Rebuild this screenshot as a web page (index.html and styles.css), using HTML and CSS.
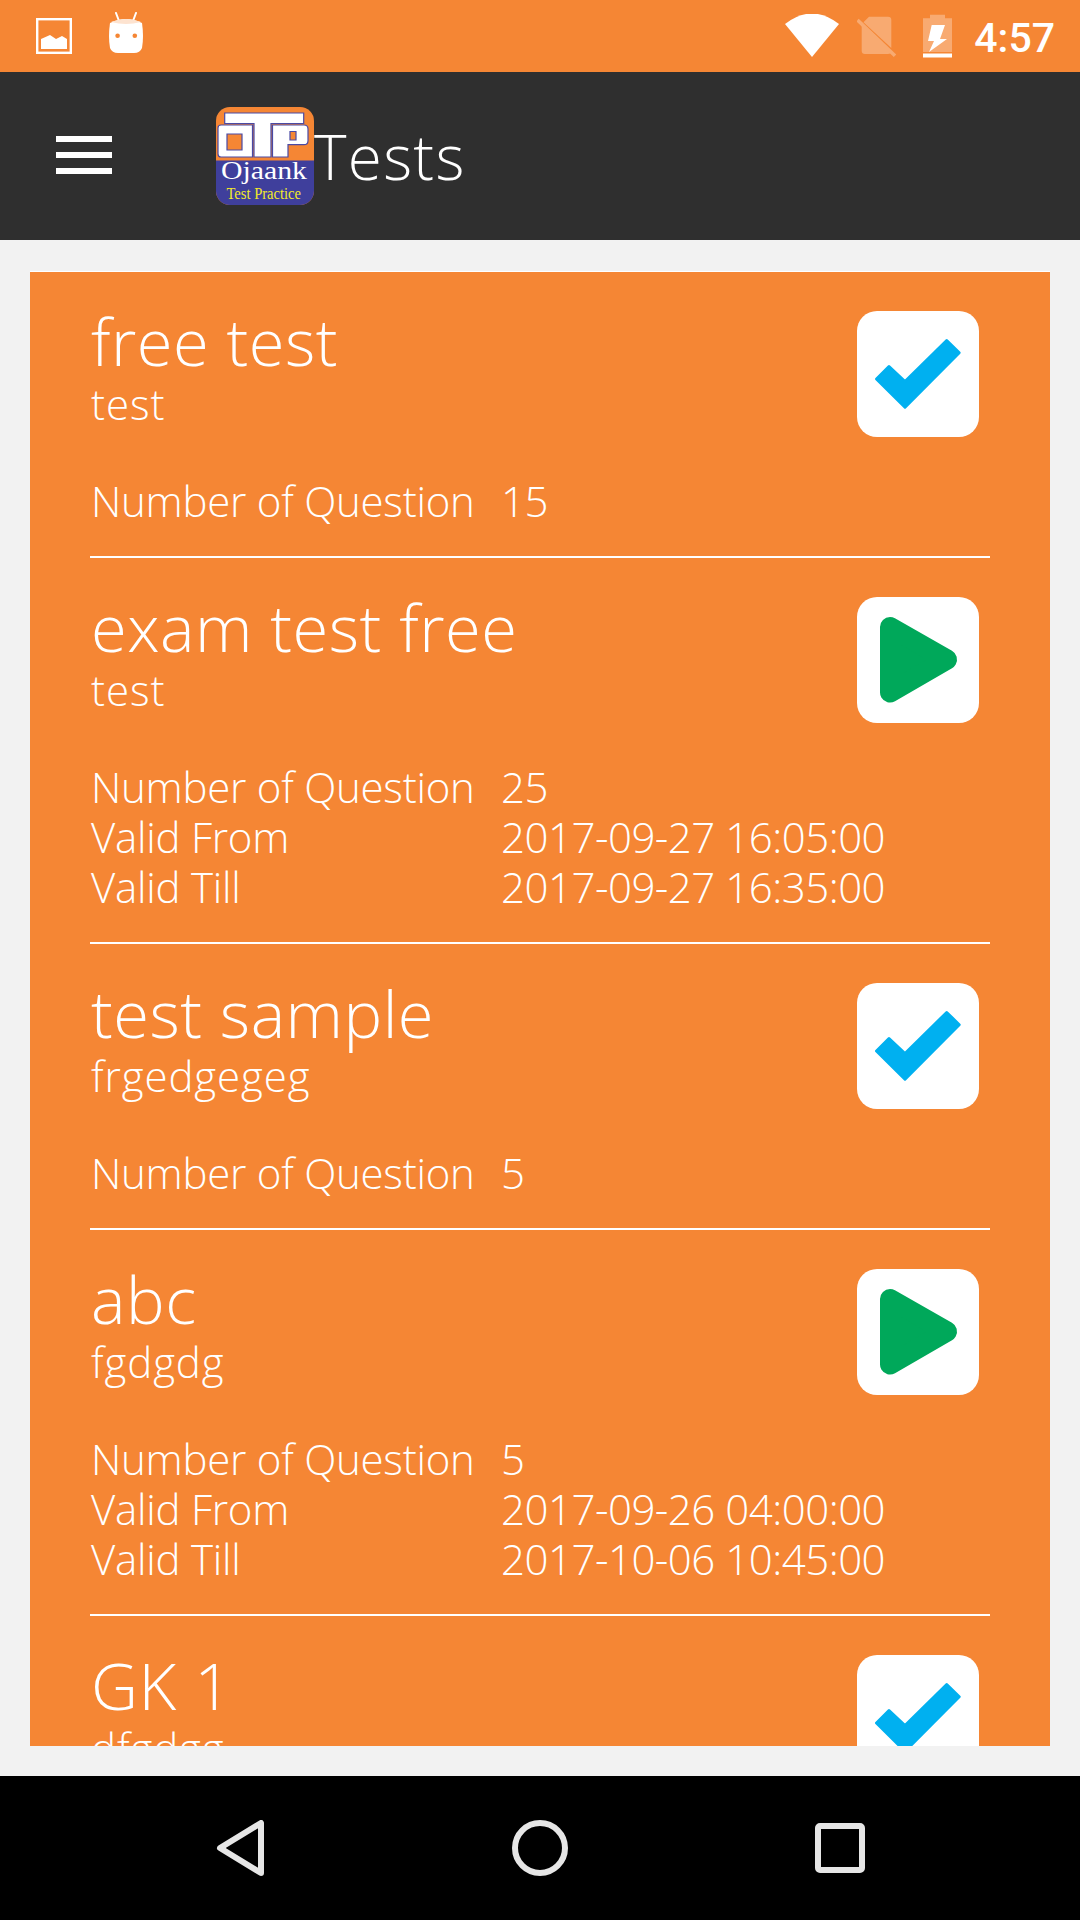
FILE: index.html
```html
<!DOCTYPE html>
<html lang="en">
<head>
<meta charset="utf-8">
<title>Tests</title>
<link rel="stylesheet" href="styles.css">
</head>
<body>
<svg class="defs" width="0" height="0" aria-hidden="true">
  <defs>
    <symbol id="check" viewBox="0 0 122 126">
      <path d="M19.5 68 L32 55.5 L48 70.5 L89.7 29.5 L102.2 41.7 L48 96.2 Z" fill="#00b0f0" stroke="#00b0f0" stroke-width="3" stroke-linejoin="round"/>
    </symbol>
    <symbol id="play" viewBox="0 0 122 126">
      <path d="M33 30 L90 62.5 L33 95.5 Z" fill="#00a85a" stroke="#00a85a" stroke-width="20" stroke-linejoin="round"/>
    </symbol>
  </defs>
</svg>
<div class="screen">
  <header class="status">
    <div class="status-left">
      <svg class="ic-image" viewBox="0 0 36 36"><rect x="1.2" y="1.2" width="33.6" height="33.6" fill="none" stroke="#fff" stroke-width="2.4"/><path d="M5 31 V21 L14 17 L20 21 L26 18 L31 21 V31 Z" fill="#fff"/></svg>
      <svg class="ic-android" viewBox="0 0 36 42"><path d="M8 1 L11 9 M28 1 L25 9" stroke="#fff" stroke-width="2" stroke-linecap="round"/><path d="M2 11 Q18 3 34 11 Q36 25 34 36 Q32 41 26 41 H10 Q4 41 2 36 Q0 25 2 11Z" fill="#fff"/><path d="M3 10 Q18 4 33 10 Q18 14 3 10Z" fill="#fde3d0"/><circle cx="9.6" cy="23.7" r="2.3" fill="#f58634"/><circle cx="26.8" cy="23.7" r="2.3" fill="#f58634"/></svg>
    </div>
    <div class="status-right">
      <svg class="ic-wifi" viewBox="0 0 54 44"><path d="M0 10 Q27 -11 54 10 L27 43 Z" fill="#fff"/></svg>
      <svg class="ic-sim" viewBox="0 0 40 44"><g opacity=".3"><path d="M6.5 8.2 L12 2.7 H31 Q34.3 2.7 34.3 6 V34 Z" fill="#fff"/><path d="M4.7 10.4 L34.3 38.2 Q33.5 40 31 40 H8 Q4.7 40 4.7 37 Z" fill="#fff"/><path d="M0.5 6 L38 41.7" stroke="#fff" stroke-width="3.5"/></g></svg>
      <svg class="ic-batt" viewBox="0 0 30 44"><path d="M7 0.7 H22 V4.3 H29 V38 H0 V4.3 H7 Z" fill="#fff" fill-opacity=".3"/><rect x="0" y="39.5" width="29" height="4" fill="#fff"/><path d="M8.7 11 H22 L17 25 H24 L6 38 L11 27 H5 Z" fill="#fff"/></svg>
      <span class="clock">4:57</span>
    </div>
  </header>
  <nav class="toolbar">
    <button class="menu" aria-label="Menu"><span></span><span></span><span></span></button>
    <svg class="logo" viewBox="0 0 98 98">
      <rect width="98" height="98" rx="14" fill="#f58634"/>
      <path d="M0 53.4 H98 V84 A14 14 0 0 1 84 98 H14 A14 14 0 0 1 0 84 Z" fill="#3f3f9c"/>
      <path d="M8.7 6 H87.7 V16.5 H55 V50 H38 V16.5 H8.7 Z" fill="#fff" stroke="#4a4aa5" stroke-width="1.2"/>
      <path d="M5 18 H36.5 V50 H5 Q2 50 2 47 V21 Q2 18 5 18 Z M11 27 V43 H26 V27 Z" fill="#fff" fill-rule="evenodd" stroke="#4a4aa5" stroke-width="1.2"/>
      <path d="M56.5 18 H88 Q92 18 92 22 V33.7 Q92 37.7 88 37.7 H72 V50 H56.5 Z M74 24.5 V33 H80 V24.5 Z" fill="#fff" fill-rule="evenodd" stroke="#4a4aa5" stroke-width="1.2"/>
      <text class="logo-name" x="5" y="72" textLength="86" lengthAdjust="spacingAndGlyphs">Ojaank</text>
      <text class="logo-sub" x="10.5" y="92" textLength="74.5" lengthAdjust="spacingAndGlyphs">Test Practice</text>
    </svg>
    <h1 class="title">Tests</h1>
  </nav>
  <main class="content">
    <section class="list">
      <article class="item">
        <div class="item-head">
          <div><h2 class="name">free test</h2><p class="sub">test</p></div>
          <div class="tile"><svg class="tile-ic"><use href="#check"/></svg></div>
        </div>
        <dl class="meta"><dt>Number of Question</dt><dd>15</dd></dl>
      </article>
      <article class="item">
        <div class="item-head">
          <div><h2 class="name">exam test free</h2><p class="sub">test</p></div>
          <div class="tile"><svg class="tile-ic"><use href="#play"/></svg></div>
        </div>
        <dl class="meta"><dt>Number of Question</dt><dd>25</dd><dt>Valid From</dt><dd>2017-09-27 16:05:00</dd><dt>Valid Till</dt><dd>2017-09-27 16:35:00</dd></dl>
      </article>
      <article class="item">
        <div class="item-head">
          <div><h2 class="name">test sample</h2><p class="sub">frgedgegeg</p></div>
          <div class="tile"><svg class="tile-ic"><use href="#check"/></svg></div>
        </div>
        <dl class="meta"><dt>Number of Question</dt><dd>5</dd></dl>
      </article>
      <article class="item">
        <div class="item-head">
          <div><h2 class="name">abc</h2><p class="sub">fgdgdg</p></div>
          <div class="tile"><svg class="tile-ic"><use href="#play"/></svg></div>
        </div>
        <dl class="meta"><dt>Number of Question</dt><dd>5</dd><dt>Valid From</dt><dd>2017-09-26 04:00:00</dd><dt>Valid Till</dt><dd>2017-10-06 10:45:00</dd></dl>
      </article>
      <article class="item">
        <div class="item-head">
          <div><h2 class="name">GK 1</h2><p class="sub">dfgdgg</p></div>
          <div class="tile"><svg class="tile-ic"><use href="#check"/></svg></div>
        </div>
      </article>
    </section>
  </main>
  <footer class="navbar">
    <svg class="nav-ic" viewBox="0 0 56 56"><path d="M49 3 V53 L8 28 Z" fill="none" stroke="#e6e6e6" stroke-width="6" stroke-linejoin="round"/></svg>
    <svg class="nav-ic" viewBox="0 0 56 56"><circle cx="28" cy="28" r="25" fill="none" stroke="#e6e6e6" stroke-width="6"/></svg>
    <svg class="nav-ic" viewBox="0 0 56 56"><rect x="6" y="6" width="44" height="44" rx="2" fill="none" stroke="#e6e6e6" stroke-width="6"/></svg>
  </footer>
</div>
</body>
</html>
```

FILE: styles.css
```css
* { box-sizing: border-box; }
html, body { margin: 0; padding: 0; }
body { width: 1080px; height: 1920px; overflow: hidden; background: #f2f2f2; font-family: "Open Sans", "Liberation Sans", sans-serif; font-weight: 300; color: #fff; }
.defs { position: absolute; }
.screen { width: 1080px; height: 1920px; display: flex; flex-direction: column; }

.status { height: 72px; flex: none; background: #f58634; display: flex; justify-content: space-between; align-items: center; padding: 0 25px 0 36px; }
.status-left { display: flex; align-items: center; gap: 36px; }
.status-right { display: flex; align-items: center; }
.ic-image { width: 36px; height: 36px; display: block; }
.ic-android { width: 36px; height: 42px; display: block; margin-top: -6px; }
.ic-wifi { width: 54px; height: 44px; display: block; margin-right: 18px; }
.ic-sim { width: 40px; height: 44px; display: block; margin-right: 26px; }
.ic-batt { width: 30px; height: 44px; display: block; margin-right: 21px; }
.clock { font-family: "Roboto", sans-serif; font-weight: 500; font-size: 41px; line-height: 72px; padding-top: 4px; }

.toolbar { height: 168px; flex: none; background: #2f2f2f; display: flex; align-items: center; padding-left: 56px; }
.menu { width: 56px; height: 38px; padding: 0; border: 0; background: none; display: flex; flex-direction: column; justify-content: space-between; margin: -2px 104px 0 0; }
.menu span { display: block; height: 6px; background: #fff; }
.logo { width: 98px; height: 98px; display: block; flex: none; }
.logo-name { font-family: "Liberation Serif", serif; font-size: 25px; font-weight: 400; fill: #fff; }
.logo-sub { font-family: "Liberation Serif", serif; font-size: 17px; font-weight: 400; fill: #f2e92a; }
.title { margin: 0; font-size: 62px; font-weight: 300; line-height: 1; letter-spacing: 1.3px; }

.content { flex: 1; min-height: 0; padding: 31px 30px 30px; }
.list { height: 100%; background: #f58634; border-top: 1px solid #fff; overflow: hidden; }
.item { margin: 0 60px; border-bottom: 2px solid #fff; padding: 34px 0 0 1px; }
.item:last-child { border-bottom: 0; }
.item-head { display: flex; justify-content: space-between; align-items: flex-start; padding-right: 11px; }
.name { margin: 0; font-size: 65px; font-weight: 300; line-height: 70px; letter-spacing: 0.5px; }
.sub { margin: 3px 0 0; font-size: 42px; line-height: 50px; letter-spacing: 0.9px; }
.tile { width: 122px; height: 126px; margin-top: 5px; background: #fff; border-radius: 20px; flex: none; }
.tile-ic { width: 122px; height: 126px; display: block; }
.meta { margin: 39px 0 0; padding-bottom: 30px; display: grid; grid-template-columns: 410px 1fr; font-size: 42px; line-height: 50px; }
.meta dt, .meta dd { margin: 0; }
.meta dt { letter-spacing: -0.25px; }
.meta dd { letter-spacing: -0.5px; }

.navbar { height: 144px; flex: none; background: #000; display: grid; grid-template-columns: 56px 56px 56px; column-gap: 244px; justify-content: center; align-items: center; }
.nav-ic { width: 56px; height: 56px; display: block; }
```
